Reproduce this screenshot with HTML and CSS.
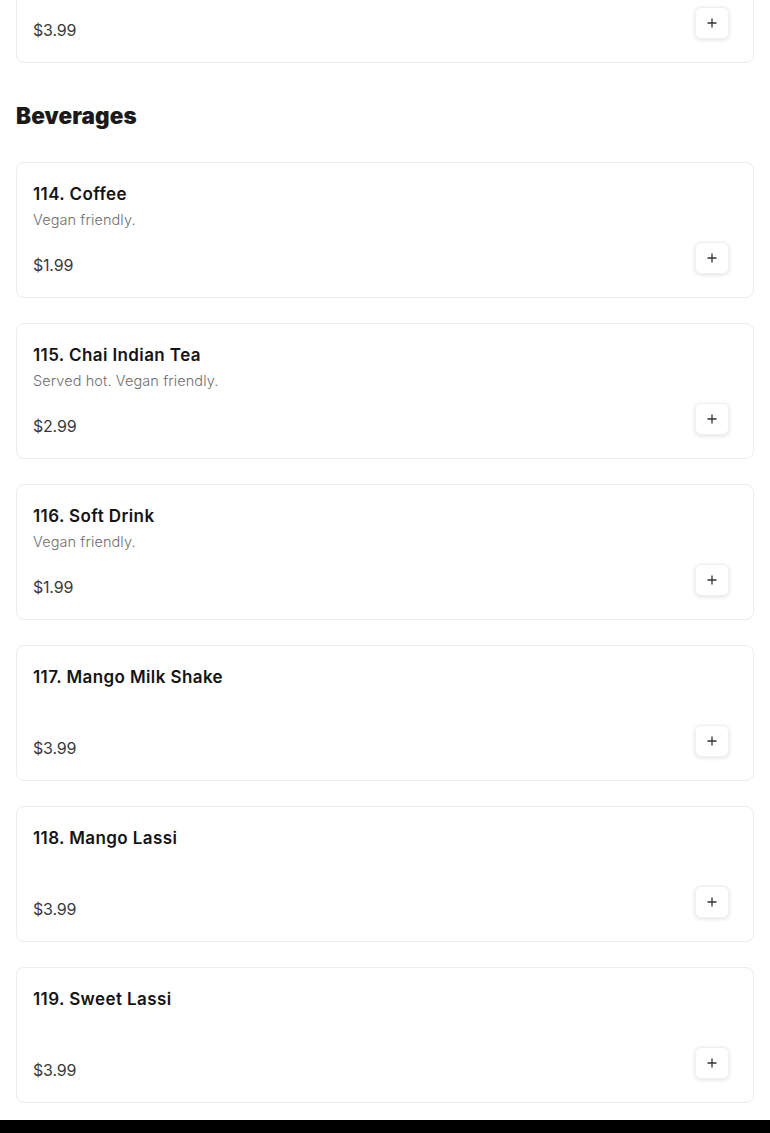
FILE: index.html
```html
<!DOCTYPE html>
<html lang="en">
<head>
    <meta charset="UTF-8">
    <meta name="viewport" content="width=device-width, initial-scale=1.0">
    <title>Menu</title>
    <link rel="stylesheet" href="styles.css">
</head>
<body>
    <main class="menu">
        <div class="item item-tail">
            <div class="item-footer">
                <span class="price">$3.99</span>
                <button class="add" aria-label="Add"><svg viewBox="0 0 12 12" width="12" height="12"><path d="M6 1.5v9M1.5 6h9"/></svg></button>
            </div>
        </div>

        <section class="category">
            <h2>Beverages</h2>

            <div class="item">
                <h3>114. Coffee</h3>
                <p class="desc">Vegan friendly.</p>
                <div class="item-footer">
                    <span class="price">$1.99</span>
                    <button class="add" aria-label="Add"><svg viewBox="0 0 12 12" width="12" height="12"><path d="M6 1.5v9M1.5 6h9"/></svg></button>
                </div>
            </div>

            <div class="item">
                <h3>115. Chai Indian Tea</h3>
                <p class="desc">Served hot. Vegan friendly.</p>
                <div class="item-footer">
                    <span class="price">$2.99</span>
                    <button class="add" aria-label="Add"><svg viewBox="0 0 12 12" width="12" height="12"><path d="M6 1.5v9M1.5 6h9"/></svg></button>
                </div>
            </div>

            <div class="item">
                <h3>116. Soft Drink</h3>
                <p class="desc">Vegan friendly.</p>
                <div class="item-footer">
                    <span class="price">$1.99</span>
                    <button class="add" aria-label="Add"><svg viewBox="0 0 12 12" width="12" height="12"><path d="M6 1.5v9M1.5 6h9"/></svg></button>
                </div>
            </div>

            <div class="item">
                <h3>117. Mango Milk Shake</h3>
                <p class="desc"></p>
                <div class="item-footer">
                    <span class="price">$3.99</span>
                    <button class="add" aria-label="Add"><svg viewBox="0 0 12 12" width="12" height="12"><path d="M6 1.5v9M1.5 6h9"/></svg></button>
                </div>
            </div>

            <div class="item">
                <h3>118. Mango Lassi</h3>
                <p class="desc"></p>
                <div class="item-footer">
                    <span class="price">$3.99</span>
                    <button class="add" aria-label="Add"><svg viewBox="0 0 12 12" width="12" height="12"><path d="M6 1.5v9M1.5 6h9"/></svg></button>
                </div>
            </div>

            <div class="item">
                <h3>119. Sweet Lassi</h3>
                <p class="desc"></p>
                <div class="item-footer">
                    <span class="price">$3.99</span>
                    <button class="add" aria-label="Add"><svg viewBox="0 0 12 12" width="12" height="12"><path d="M6 1.5v9M1.5 6h9"/></svg></button>
                </div>
            </div>
        </section>
    </main>

    <footer class="site-footer"></footer>
</body>
</html>
```

FILE: styles.css
```css
body {
    margin: 0;
    background-color: #fff;
    font-family: Inter, "Open Sans", sans-serif;
    color: #1a1a1a;
}

.menu {
    display: flex;
    flex-direction: column;
    gap: 25px;
    padding: 0 16px 17px;
    margin-top: -12px;
}

.category {
    display: flex;
    flex-direction: column;
    gap: 25px;
}

.category h2 {
    margin: 12px 0 5px;
    font-size: 22.5px;
    line-height: 32px;
    font-weight: 900;
    letter-spacing: 0.1px;
    color: #1a1a1a;
}

.item {
    border: 1px solid #ececec;
    border-radius: 8px;
    padding: 19px 24px 23px 16px;
    background-color: #fff;
}

.item-tail {
    padding-top: 18px;
}

.item h3 {
    margin: 0 0 4px;
    font-size: 17px;
    line-height: 24px;
    font-weight: 600;
    letter-spacing: 0.4px;
    color: #141414;
}

.item .desc {
    margin: 0;
    min-height: 20px;
    font-size: 14.5px;
    line-height: 20px;
    font-weight: 300;
    letter-spacing: 0.1px;
    color: #6e6e6e;
}

.item-footer {
    display: flex;
    justify-content: space-between;
    align-items: flex-end;
    margin-top: 12px;
}

.item-tail .item-footer {
    margin-top: 0;
}

.price {
    font-size: 16px;
    line-height: 20px;
    margin-bottom: -1px;
    letter-spacing: -0.2px;
    color: #3a3a3a;
}

.add {
    display: flex;
    align-items: center;
    justify-content: center;
    width: 34px;
    height: 32px;
    padding: 0;
    border: 1px solid #f0f0f0;
    border-radius: 6px;
    background-color: #fff;
    box-shadow: 0 1px 4px rgba(0, 0, 0, 0.12);
    cursor: pointer;
}

.add svg {
    stroke: #333;
    stroke-width: 1.3;
    fill: none;
}

.site-footer {
    height: 120px;
    background-color: #000;
}
```
